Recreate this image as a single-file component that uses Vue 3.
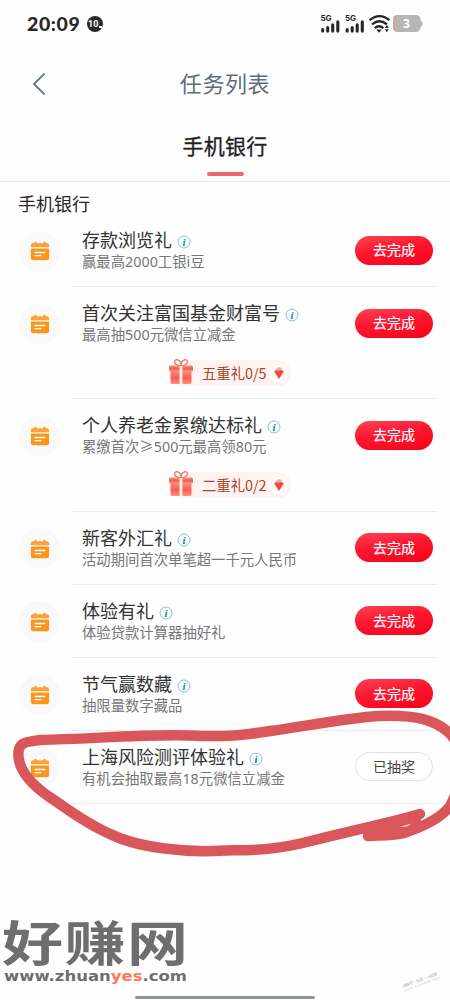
<script setup>
const tasks = [
  { title: '存款浏览礼', sub: '赢最高2000工银i豆' },
  { title: '首次关注富国基金财富号', sub: '最高抽500元微信立减金', gift: '五重礼0/5' },
  { title: '个人养老金累缴达标礼', sub: '累缴首次≥500元最高领80元', gift: '二重礼0/2' },
  { title: '新客外汇礼', sub: '活动期间首次单笔超一千元人民币' },
  { title: '体验有礼', sub: '体验贷款计算器抽好礼' },
  { title: '节气赢数藏', sub: '抽限量数字藏品' },
  { title: '上海风险测评体验礼', sub: '有机会抽取最高18元微信立减金', done: true },
]
</script>

<template>
  <div class="screen">
    <header class="status">
      <span class="time">20:09</span>
      <span class="badge">10<i></i></span>
      <svg class="signals" width="106" height="22" viewBox="0 0 106 22">
        <g v-for="x in [0, 24.5]" :key="x" :transform="`translate(${x} 0)`">
          <text x="0.5" y="7.3" class="five" textLength="11">5G</text>
          <g stroke="#272727" stroke-width="3.1" stroke-linecap="round">
            <path d="M2.7 15.5v1.6M7.7 13.5v3.6M12.7 10.7v6.4M17.8 7.7v9.4" />
          </g>
        </g>
        <g fill="none" stroke="#272727" stroke-width="2.2">
          <path d="M49.5 6.2Q59.500-2 69.500 6.2M52 10.3Q59.500 4.200 67 10.3M54.7 14.1Q59 10.400 63.4 14.1" />
          <path d="M56.2 15.5h5.5L59 18.7Z" fill="#272727" stroke="none" />
          <path d="M64.8 14l2-2.900 2 2.900zM64.8 15.300l2 2.900 2-2.900z" fill="#272727" stroke="none" />
        </g>
        <rect x="73" y="1" width="27.5" height="17" rx="4.5" fill="#b6b6b6" />
        <path d="M77 1.2q-3.7.5-3.700 4.200v8.200q0 3.500 3.700 4.200-2-1-2-4v-8q0-3 2-4" fill="#e69a98" />
        <path d="M100 6q2.8 1.5 2.8 3.7T100 13.5z" fill="#b6b6b6" />
        <text x="86.5" y="13.8" class="power">3</text>
      </svg>
    </header>

    <nav class="nav">
      <svg class="back" width="14" height="24" viewBox="0 0 14 24">
        <path d="M12.5 1.7L2 12l10.5 10.3" fill="none" stroke="#5b7487" stroke-width="1.8" />
      </svg>
      <span>任务列表</span>
    </nav>

    <div class="tab"><span>手机银行</span><i></i></div>
    <h2>手机银行</h2>

    <main>
      <section v-for="task in tasks" :key="task.title" class="task" :class="{ tall: task.gift }">
        <div class="avatar">
          <svg width="20" height="20" viewBox="0 0 20 20">
            <path d="M2.5 2.2h1.7q.3-1.8 1.3-1.8t1.2 1.8h6.5q.3-1.8 1.3-1.8t1.3 1.8h1.3q2 0 2 2v2H.9v-2q0-2 1.6-2" fill="#f9a238" />
            <path d="M.9 7.6h18.2v9.2q0 2.5-2.5 2.5H3.4q-2.5 0-2.5-2.5z" fill="#f9961d" />
            <path d="M5.1 11.5h9.7M5.1 14.6h5.7" stroke="#fff" stroke-width="1.4" stroke-linecap="round" />
          </svg>
        </div>
        <div class="body">
          <div class="info">
            <div class="title">
              <span>{{ task.title }}</span>
              <svg width="14" height="14" viewBox="0 0 14 14">
                <circle cx="7" cy="7" r="6" fill="#f7fcff" stroke="#80b8da" stroke-width=".9" />
                <text x="7" y="10.7" class="letter">i</text>
              </svg>
            </div>
            <div class="sub">{{ task.sub }}</div>
          </div>
          <button :class="{ done: task.done }">{{ task.done ? '已抽奖' : '去完成' }}</button>
          <div v-if="task.gift" class="gift">
            <svg class="box" width="26" height="27" viewBox="0 0 26 27">
              <defs>
                <linearGradient id="box-red" x2="0" y2="1">
                  <stop stop-color="#f99082" /><stop offset=".55" stop-color="#f85a50" /><stop offset="1" stop-color="#ff9187" />
                </linearGradient>
              </defs>
              <path d="M13 8C4 7 6 0 10 2q3 1 3 6 0-5 3-6c4-2 6 5-3 6" fill="#fff3ed" stroke="#d0705c" stroke-width="1.1" />
              <rect x="1" y="7.5" width="24" height="6" rx="1" fill="url(#box-red)" />
              <rect x="2.5" y="12.500" width="21" height="13.500" rx="1.5" fill="url(#box-red)" />
              <path d="M11.5 8h3v18h-3z" fill="#fff0df" />
            </svg>
            <span>{{ task.gift }}</span>
            <svg class="arrow" width="22" height="22" viewBox="0 0 22 22">
              <circle cx="11" cy="11" r="10" fill="#fffafa" />
              <path d="M6.200 9.500q2-2.500 4.800-2.500t4.800 2.500l-4.800 7.500z" fill="#ec4b43" />
              <path d="M7 8.600q2-3.500 4-3.500t4 3.500z" fill="#f6aaa4" />
            </svg>
          </div>
        </div>
      </section>
    </main>

    <svg class="marker" width="450" height="150" viewBox="0 720 450 150">
      <g fill="none" stroke="#d9565b" stroke-linecap="round" stroke-linejoin="round">
        <path stroke-width="10.5" d="M420 814C385 824 350 831 311 841S250 850 225 850.500C185 853 137 848 108 833C83 822 65 807 48 796C31 784 20 772 18.500 757C17 742 25 742 40 740C92 739 142 734 190 735.500C222 737 240 736 270 731C306 726 348 718 378 716C417 714 436 721 448 732C463 744 465 780 450 806C440 820 419 828 404 833C388 836 379 835 368 836" />
        <path stroke-width="10" d="M368 832L416 819L395 829" />
      </g>
      <path d="M399 827l13-3.500-5 3z" fill="#fff" opacity=".8" />
    </svg>

    <svg class="brand" width="190" height="68" viewBox="0 0 190 68">
      <text x="2" y="53" class="brand-name" transform="scale(1 .78)" textLength="186">好赚网</text>
      <text x="4" y="61" class="brand-url" textLength="183" lengthAdjust="spacingAndGlyphs">www.zhuan<tspan fill="#ff7a59">yes</tspan>.com</text>
    </svg>

    <svg class="stamp" width="48" height="28" viewBox="0 0 48 28">
      <g transform="rotate(-20 4 22)" fill="#b5b5b5">
        <text x="4" y="19.500" font-size="4" textLength="37">赚客吧 · 有奖 · 一起赚!</text>
        <text x="4" y="23.500" font-size="3" textLength="38">www.zuanke8.com</text>
      </g>
    </svg>
    <div class="home"></div>
  </div>
</template>

<style>
body { background: #fefefe; overflow: hidden; }
</style>

<style scoped>
.screen {
  position: relative;
  width: 450px;
  height: 1000px;
  overflow: hidden;
  background: #fefefe;
  color: #333;
  font-family: "Noto Sans CJK SC", sans-serif;
}
.status { display: flex; align-items: center; height: 48px; padding: 0 24px 0 27px; }
.time { font: 900 19.500px/24px Lato, sans-serif; width: 54px; letter-spacing: .6px; color: #282828; }
.badge {
  position: relative;
  width: 16px;
  height: 16px;
  margin-left: 6px;
  border-radius: 50%;
  background: #2a2a2a;
  color: #fff;
  font: bold 9px/16px Roboto, sans-serif;
  text-indent: 1px;
}
.badge i { position: absolute; right: 1px; bottom: 4px; width: 3px; height: 2px; background: #fff; }
.signals { margin-left: auto; transform: translateY(1px); }
.five { font: bold 8px Inter, sans-serif; fill: #272727; }
.power { font: bold 12px "Open Sans", sans-serif; fill: #fff; text-anchor: middle; }
.nav { position: relative; display: flex; align-items: center; justify-content: center; box-sizing: border-box; height: 72px; padding-bottom: 4px; color: #5c6e7c; font-size: 22px; letter-spacing: .6px; }
.back { position: absolute; left: 32px; top: 24px; }
.tab { display: flex; flex-direction: column; align-items: center; height: 62px; border-bottom: 1px solid #e8e8e8; box-sizing: border-box; }
.tab span { height: 52px; line-height: 50px; font-size: 21px; -webkit-text-stroke: .3px #222; color: #222; letter-spacing: .3px; }
.tab i { width: 37px; height: 4px; border-radius: 2px; background: #eb676c; }
h2 { height: 32px; margin: 0; padding-left: 18px; font-size: 18px; line-height: 42px; font-weight: 400; color: #282828; }
.task { display: flex; height: 73px; }
.task.tall { height: 112.300px; }
.avatar { display: flex; align-items: center; justify-content: center; width: 41px; height: 41px; margin: 16.500px 12px 0 19px; flex: none; border-radius: 50%; background: #f9f9fa; }
.body { display: flex; flex-wrap: wrap; align-content: flex-start; box-sizing: border-box; width: 366px; padding: 12px 5px 0 10px; border-bottom: 1px solid #ececec; }
.info { flex: 1; height: 48px; }
.title { display: flex; align-items: center; height: 26px; font-size: 18px; line-height: 26px; white-space: nowrap; color: #333; }
.title svg { margin: 6px 0 0 5px; }
.letter { font: italic bold 11px "Liberation Serif", serif; fill: #287db8; text-anchor: middle; }
.sub { font-family: "Noto Sans", "Noto Sans CJK SC", sans-serif; font-size: 14.350px; line-height: 20px; white-space: nowrap; color: #777; }
button {
  box-sizing: border-box;
  width: 78px;
  height: 29px;
  margin: 9.600px 0 0;
  padding: 0 0 2px;
  border: 0;
  border-radius: 15px;
  background: linear-gradient(170deg, #fb4454 0%, #fb1730 45%, #f8001a 100%);
  color: #fff;
  font: 400 14px/26px "Noto Sans CJK SC", sans-serif;
  -webkit-text-stroke: .2px #fff;
}
button.done { border: 1.500px solid #e1e1e1; background: #fff; color: #444; line-height: 24px; -webkit-text-stroke: 0; }
.gift { display: flex; align-items: center; width: 122px; height: 26px; margin: 13px 0 0 87px; background: linear-gradient(#fff3f1, #fff3f1) 12px 0 / 110px 26px no-repeat; border-radius: 13px; color: #a94529; font-size: 14.350px; }
.box { margin: -4px 8px 0 -1px; width: 26px; flex: none; }
.gift span { flex: 1; white-space: nowrap; line-height: 24px; }
.arrow { margin-right: 1px; flex: none; }
.marker { position: absolute; left: 0; top: 720px; overflow: visible; }
.brand { position: absolute; left: 0; top: 920px; overflow: visible; }
.brand-name { font: 700 61px "Noto Sans CJK SC", sans-serif; fill: #6e6e6e; }
.brand-url { font: bold 14.500px "DejaVu Sans", sans-serif; fill: #6e6e6e; }
.stamp { position: absolute; left: 400px; top: 968px; }
.home { position: absolute; left: 135px; top: 996px; width: 180px; height: 3px; border-radius: 2px; background: #929692; }
</style>
